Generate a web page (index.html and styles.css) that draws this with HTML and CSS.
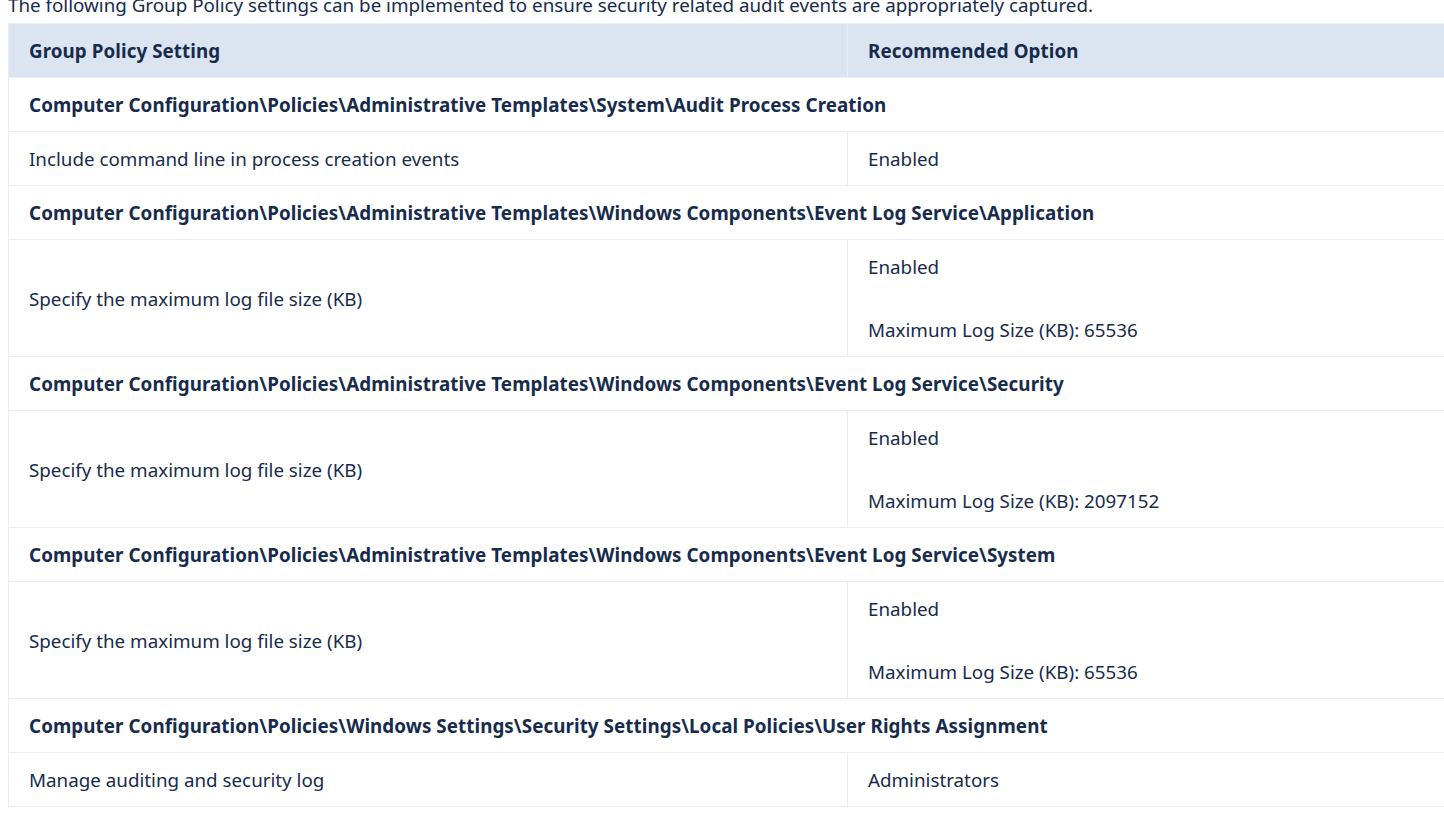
FILE: index.html
```html
<!DOCTYPE html>
<html>
<head>
<meta charset="utf-8">
<link rel="stylesheet" href="styles.css">
</head>
<body>
<p class="intro">The following Group Policy settings can be implemented to ensure security related audit events are appropriately captured.</p>
<table class="gp">
  <thead>
    <tr><th class="c1">Group Policy Setting</th><th class="c2">Recommended Option</th></tr>
  </thead>
  <tbody>
    <tr class="sec"><td colspan="2">Computer Configuration\Policies\Administrative Templates\System\Audit Process Creation</td></tr>
    <tr><td>Include command line in process creation events</td><td>Enabled</td></tr>
    <tr class="sec"><td colspan="2">Computer Configuration\Policies\Administrative Templates\Windows Components\Event Log Service\Application</td></tr>
    <tr><td>Specify the maximum log file size (KB)</td><td><p>Enabled</p><p>Maximum Log Size (KB): 65536</p></td></tr>
    <tr class="sec"><td colspan="2">Computer Configuration\Policies\Administrative Templates\Windows Components\Event Log Service\Security</td></tr>
    <tr><td>Specify the maximum log file size (KB)</td><td><p>Enabled</p><p>Maximum Log Size (KB): 2097152</p></td></tr>
    <tr class="sec"><td colspan="2">Computer Configuration\Policies\Administrative Templates\Windows Components\Event Log Service\System</td></tr>
    <tr><td>Specify the maximum log file size (KB)</td><td><p>Enabled</p><p>Maximum Log Size (KB): 65536</p></td></tr>
    <tr class="sec"><td colspan="2">Computer Configuration\Policies\Windows Settings\Security Settings\Local Policies\User Rights Assignment</td></tr>
    <tr><td>Manage auditing and security log</td><td>Administrators</td></tr>
  </tbody>
</table>
</body>
</html>
```
FILE: styles.css
```css
html, body {
  margin: 0;
  padding: 0;
  background: #ffffff;
}
body {
  padding: 0 0 0 8px;
  font-family: "Noto Sans", "Open Sans", sans-serif;
  font-size: 18.8px;
  line-height: 28px;
  color: #172b4d;
  overflow: hidden;
  width: 1600px;
}
.intro {
  margin: -9px 0 4px 0;
  white-space: nowrap;
}
.gp {
  border-collapse: collapse;
  width: 1460px;
  table-layout: fixed;
}
.gp .c1 { width: 839px; }
.gp th, .gp td {
  box-sizing: border-box;
  border: 1px solid #ebecf0;
  padding: 13px 20px 12px 20px;
  text-align: left;
  vertical-align: middle;
}
.gp th {
  background: #dbe5f1;
  font-weight: 700;
  letter-spacing: 0.07px;
  border-color: #e8eef6;
}
.gp .sec td {
  font-weight: 700;
  letter-spacing: 0.07px;
}
.gp td p {
  margin: 0;
}
.gp td p + p {
  margin-top: 35px;
}
```
